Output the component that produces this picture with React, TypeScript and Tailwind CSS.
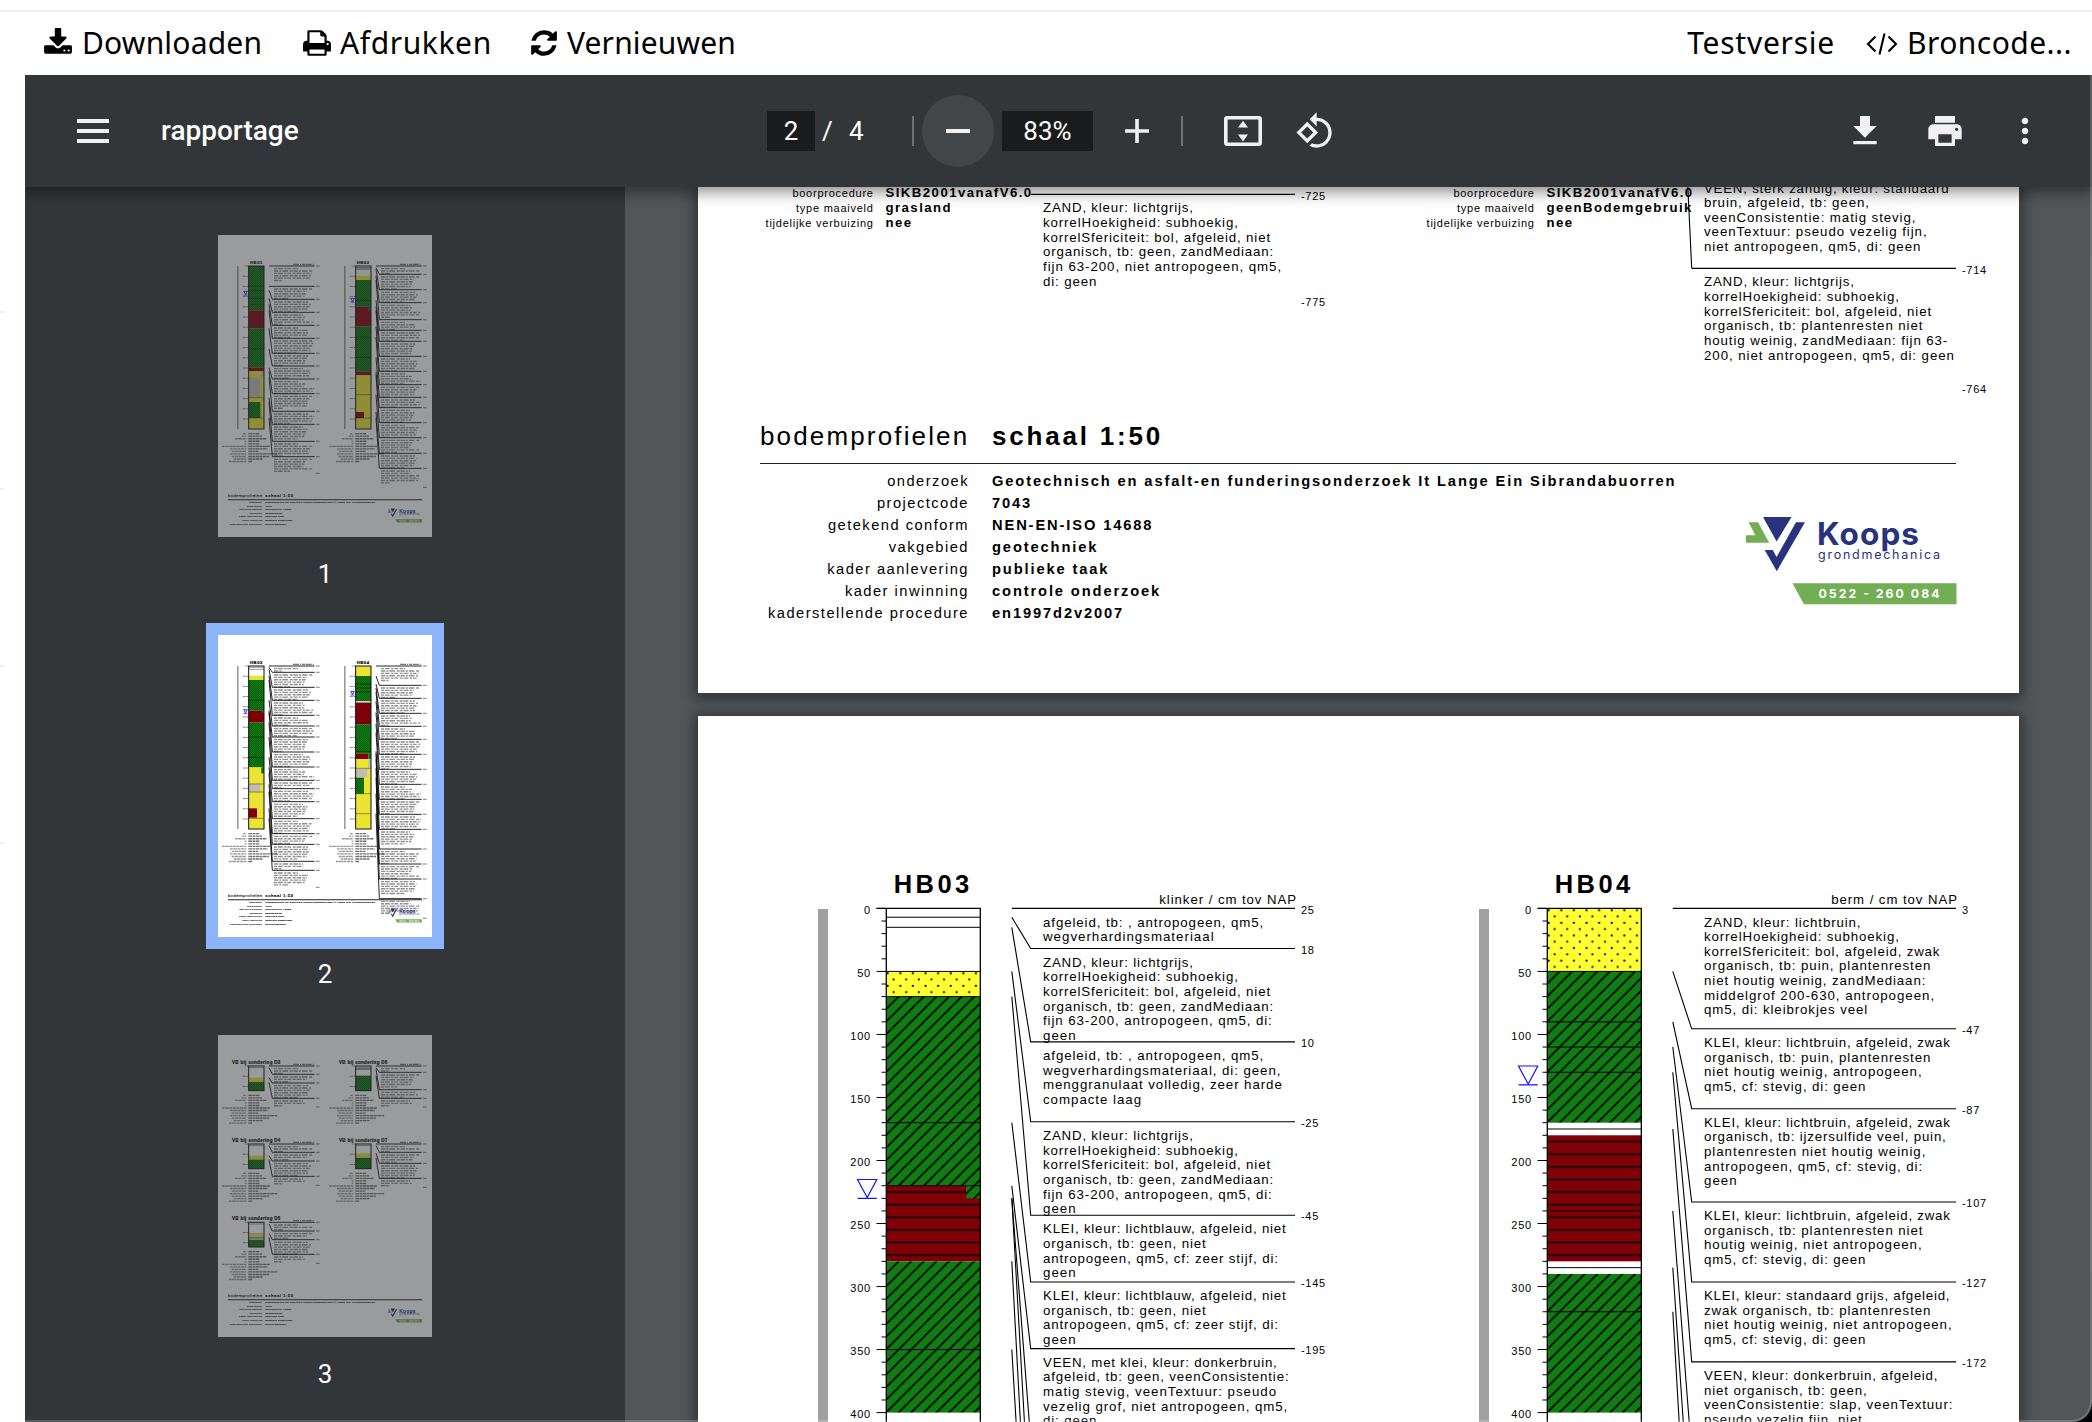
import React from "react";

const ARIAL = '"Liberation Sans", Arial, sans-serif';

const GREEN = "#0f7d12";
const RED = "#800008";
const YELLOW = "#ffff33";

/* ---------- header icons ---------- */

function HeaderIcon({ d, className }: { d: string; className: string }) {
  return (
    <svg viewBox="0 0 1792 1792" className={"block h-[30px] w-[30px] shrink-0 " + className}>
      <path d={d} fill="#000" />
    </svg>
  );
}

const DOWNLOAD =
  "M1344 1344q0-26-19-45t-45-19-45 19-19 45 19 45 45 19 45-19 19-45zm256 0q0-26-19-45t-45-19-45 19-19 45 19 45 45 19 45-19 19-45zm128-224v320q0 40-28 68t-68 28h-1472q-40 0-68-28t-28-68v-320q0-40 28-68t68-28h465l135 136q58 56 136 56t136-56l136-136h464q40 0 68 28t28 68zm-325-569q17 41-14 70l-448 448q-18 19-45 19t-45-19l-448-448q-31-29-14-70 17-39 59-39h256v-448q0-26 19-45t45-19h256q26 0 45 19t19 45v448h256q42 0 59 39z";
const PRINT =
  "M448 1536h896v-256h-896v256zm0-640h896v-384h-160q-40 0-68-28t-28-68v-160h-640v640zm1152 64q0-26-19-45t-45-19-45 19-19 45 19 45 45 19 45-19 19-45zm128 0v416q0 13-9.500 22.500t-22.500 9.500h-224v160q0 40-28 68t-68 28h-960q-40 0-68-28t-28-68v-160h-224q-13 0-22.500-9.500t-9.500-22.500v-416q0-79 56.500-135.500t135.500-56.500h64v-544q0-40 28-68t68-28h672q40 0 88 20t76 48l152 152q28 28 48 76t20 88v256h64q79 0 135.500 56.500t56.500 135.500z";
const REFRESH =
  "M1639 1056q0 5-1 7-64 268-268 434.500t-478 166.500q-146 0-282.500-55t-243.500-157l-129 129q-19 19-45 19t-45-19-19-45v-448q0-26 19-45t45-19h448q26 0 45 19t19 45-19 45l-137 137q71 66 161 102t187 36q134 0 250-65t186-179q11-17 53-117 8-23 30-23h192q13 0 22.500 9.500t9.500 22.500zm25-800v448q0 26-19 45t-45 19h-448q-26 0-45-19t-19-45 19-45l138-138q-148-137-349-137-134 0-250 65t-186 179q-11 17-53 117-8 23-30 23h-199q-13 0-22.500-9.500t-9.500-22.500v-7q65-268 270-434.500t480-166.500q146 0 284 55.500t245 156.500l130-129q19-19 45-19t45 19 19 45z";

function Header() {
  return (
    <header className="h-[75px] w-full bg-white">
      <div className="h-2.5" />
      <div className="h-0.5 bg-[#f0f0f0]" />
      <div
        className="flex h-[62px] items-start pl-[43px] pt-[16px] text-[30px] leading-[30px] text-black"
        style={{ fontFamily: '"Noto Sans", sans-serif' }}
      >
        <div className="flex w-[259px]">
          <HeaderIcon d={DOWNLOAD} className="mr-[9px]" />
          <span className="tracking-[0.2px]">Downloaden</span>
        </div>
        <div className="flex w-[227px]">
          <HeaderIcon d={PRINT} className="mr-2" />
          <span className="tracking-[0.6px]">Afdrukken</span>
        </div>
        <div className="flex">
          <HeaderIcon d={REFRESH} className="mr-2" />
          <span className="tracking-[0.15px]">Vernieuwen</span>
        </div>
        <div className="ml-auto flex pr-[20px]">
          <span className="tracking-[0.75px]">Testversie</span>
          <svg viewBox="0 0 32 24" className="ml-[31px] mr-[9px] mt-[4px] h-[24px] w-[32px]" fill="none" stroke="#000" strokeWidth="2.1">
            <path d="M9.500 4.500 L2 12 L9.500 19.500 M22.500 4.500 L30 12 L22.500 19.500 M18.500 1.500 L13.500 22.500" />
          </svg>
          <span className="tracking-[0.45px]">Broncode...</span>
        </div>
      </div>
    </header>
  );
}

/* ---------- viewer toolbar ---------- */

function ToolIcon({ d }: { d: string }) {
  return (
    <svg viewBox="0 0 24 24" className="block h-10 w-10 shrink-0 fill-[#f1f1f1]">
      <path d={d} />
    </svg>
  );
}

function Toolbar() {
  return (
    <div
      className="relative z-10 flex h-[112px] w-full shrink-0 items-center bg-[#323639] text-white shadow-[0_2px_14px_3px_rgba(0,0,0,0.45)]"
      style={{ fontFamily: "Roboto, sans-serif" }}
    >
      <div className="ml-[52px] flex w-[32px] flex-col gap-[6px]">
        <div className="h-1 bg-[#f1f1f1]" />
        <div className="h-1 bg-[#f1f1f1]" />
        <div className="h-1 bg-[#f1f1f1]" />
      </div>
      <div className="ml-[52px] w-[606px] text-[28px] font-medium leading-[40px]">rapportage</div>
      <div className="flex h-10 w-12 items-center justify-center bg-[#191b1c] text-[26px]">2</div>
      <div className="ml-[7px] w-[27px] text-[26px]">/</div>
      <div className="w-[63px] text-[26px]">4</div>
      <div className="h-[30px] w-0.5 bg-[#6f7274]" />
      <div className="ml-[8px] flex h-[72px] w-[72px] items-center justify-center rounded-full bg-[#424649]">
        <div className="h-[4px] w-6 bg-[#f1f1f1]" />
      </div>
      <div className="ml-[8px] flex h-10 w-[91px] items-center justify-center bg-[#191b1c] text-[26px]">83%</div>
      <svg viewBox="0 0 24 24" className="ml-[32px] block h-6 w-6 fill-[#f1f1f1]">
        <path d="M10.200 0h3.600v10.200H24v3.600H13.800V24h-3.600V13.800H0v-3.600h10.200z" />
      </svg>
      <div className="ml-[32px] h-[30px] w-0.5 bg-[#6f7274]" />
      <svg viewBox="0 0 38 30" className="ml-[41px] block h-[30px] w-[38px]">
        <rect x="1.800" y="1.800" width="34.400" height="26.400" rx="1.500" fill="none" stroke="#f1f1f1" strokeWidth="3.600" />
        <path d="M19 4.700L24 11.400H14zM19 25.600L24 18.400H14z" fill="#f1f1f1" />
      </svg>
      <div className="ml-[33px]">
        <ToolIcon d="M7.340 6.410L.86 12.900l6.490 6.480 6.490-6.480-6.500-6.490zM3.690 12.900l3.660-3.660L11 12.900l-3.660 3.660-3.650-3.660zm15.670-6.260C17.610 4.880 15.300 4 13 4V.76L8.760 5 13 9.240V6c1.790 0 3.580.68 4.950 2.050 2.730 2.730 2.730 7.170 0 9.900C16.580 19.320 14.790 20 13 20c-.97 0-1.940-.21-2.840-.61l-1.490 1.490C10.020 21.620 11.510 22 13 22c2.300 0 4.610-.88 6.360-2.640 3.520-3.510 3.520-9.210 0-12.720z" />
      </div>
      <div className="ml-auto mr-[47px] flex gap-10">
        <ToolIcon d="M19 9h-4V3H9v6H5l7 7 7-7zM5 18v2h14v-2H5z" />
        <ToolIcon d="M19 8H5c-1.660 0-3 1.340-3 3v6h4v4h12v-4h4v-6c0-1.660-1.340-3-3-3zm-3 11H8v-5h8v5zm3-7c-.55 0-1-.45-1-1s.45-1 1-1 1 .45 1 1-.45 1-1 1zm-1-9H6v4h12V3z" />
        <ToolIcon d="M12 8c1.100 0 2-.9 2-2s-.9-2-2-2-2 .9-2 2 .9 2 2 2zm0 2c-1.100 0-2 .9-2 2s.9 2 2 2 2-.9 2-2-.9-2-2-2zm0 6c-1.100 0-2 .9-2 2s.9 2 2 2 2-.9 2-2-.9-2-2-2z" />
      </div>
    </div>
  );
}

/* ---------- logo ---------- */

function LogoShapes() {
  return (
    <g>
      <path d="M1763 517H1791.500L1776.600 541.500Z" fill="#28327d" />
      <path d="M1764.700 550H1772.800L1776.600 557L1796 522.300H1805L1776.800 571.200Z" fill="#28327d" />
      <path d="M1748.600 522.300H1758L1769.200 542.800H1746V535.300H1755.300Z" fill="#73ad54" />
      <path d="M1792.500 583.300H1956.500V604.200H1804Z" fill="#73ad54" />
      <text x="1817" y="545.300" fontFamily="Inter, sans-serif" fontWeight="700" fontSize="31.500" fill="#28327d" textLength="102">Koops</text>
      <text x="1818" y="559.300" fontFamily="Inter, sans-serif" fontSize="12.500" fill="#28327d" textLength="122">grondmechanica</text>
      <text x="1818.500" y="598.300" fontFamily="Inter, sans-serif" fontWeight="700" fontSize="12.300" fill="#fff" textLength="121">0522 - 260 084</text>
    </g>
  );
}

/* ---------- bore profile ---------- */

const PX_PER_CM = 1.2605;
const TOP = 908.4;
const depthY = (cm: number) => TOP + cm * PX_PER_CM;

type Fill = "sand" | "clay" | "peat" | "none";
interface Layer { from: number; to: number; fill: Fill; left?: number; right?: number }
interface Entry { depth?: string; y: number; start?: number; lines: string[] }
interface Profile {
  id: string;
  name: string;
  surface: string;
  water: number;
  layers: Layer[];
  rules: number[];
  entries: Entry[];
}

const HB03: Profile = {
  id: "a",
  name: "HB03",
  surface: "klinker / cm tov NAP",
  water: 1179.5,
  layers: [
    { from: 0, to: 50, fill: "none" },
    { from: 50, to: 70, fill: "sand" },
    { from: 70, to: 220, fill: "clay" },
    { from: 220, to: 280, fill: "peat" },
    { from: 220, to: 230, fill: "clay", left: 966 },
    { from: 280, to: 400, fill: "clay" },
  ],
  rules: [7, 15, 50, 70, 170, 220, 350],
  entries: [
    { depth: "25", y: 908.4, start: 0, lines: ["afgeleid, tb: , antropogeen, qm5,", "wegverhardingsmateriaal"] },
    { depth: "18", y: 948.5, start: 7, lines: ["ZAND, kleur: lichtgrijs,", "korrelHoekigheid: subhoekig,", "korrelSfericiteit: bol, afgeleid, niet", "organisch, tb: geen, zandMediaan:", "fijn 63-200, antropogeen, qm5, di:", "geen"] },
    { depth: "10", y: 1041.9, start: 15, lines: ["afgeleid, tb: , antropogeen, qm5,", "wegverhardingsmateriaal, di: geen,", "menggranulaat volledig, zeer harde", "compacte laag"] },
    { depth: "-25", y: 1121.8, start: 50, lines: ["ZAND, kleur: lichtgrijs,", "korrelHoekigheid: subhoekig,", "korrelSfericiteit: bol, afgeleid, niet", "organisch, tb: geen, zandMediaan:", "fijn 63-200, antropogeen, qm5, di:", "geen"] },
    { depth: "-45", y: 1215.2, start: 70, lines: ["KLEI, kleur: lichtblauw, afgeleid, niet", "organisch, tb: geen, niet", "antropogeen, qm5, cf: zeer stijf, di:", "geen"] },
    { depth: "-145", y: 1282, start: 170, lines: ["KLEI, kleur: lichtblauw, afgeleid, niet", "organisch, tb: geen, niet", "antropogeen, qm5, cf: zeer stijf, di:", "geen"] },
    { depth: "-195", y: 1348.6, start: 220, lines: ["VEEN, met klei, kleur: donkerbruin,", "afgeleid, tb: geen, veenConsistentie:", "matig stevig, veenTextuur: pseudo", "vezelig grof, niet antropogeen, qm5,", "di: geen"] },
    { y: 1440, start: 230, lines: [] },
    { y: 1533, start: 230, lines: [] },
    { y: 1614, start: 280, lines: [] },
    { y: 1668, start: 350, lines: [] },
  ],
};

const HB04: Profile = {
  id: "b",
  name: "HB04",
  surface: "berm / cm tov NAP",
  water: 1066,
  layers: [
    { from: 0, to: 50, fill: "sand" },
    { from: 50, to: 170, fill: "clay" },
    { from: 180, to: 280, fill: "peat" },
    { from: 290, to: 400, fill: "clay" },
  ],
  rules: [50, 90, 110, 130, 175, 240, 285, 320],
  entries: [
    { depth: "3", y: 908.4, start: 0, lines: ["ZAND, kleur: lichtbruin,", "korrelHoekigheid: subhoekig,", "korrelSfericiteit: bol, afgeleid, zwak", "organisch, tb: puin, plantenresten", "niet houtig weinig, zandMediaan:", "middelgrof 200-630, antropogeen,", "qm5, di: kleibrokjes veel"] },
    { depth: "-47", y: 1028.8, start: 50, lines: ["KLEI, kleur: lichtbruin, afgeleid, zwak", "organisch, tb: puin, plantenresten", "niet houtig weinig, antropogeen,", "qm5, cf: stevig, di: geen"] },
    { depth: "-87", y: 1108.7, start: 90, lines: ["KLEI, kleur: lichtbruin, afgeleid, zwak", "organisch, tb: ijzersulfide veel, puin,", "plantenresten niet houtig weinig,", "antropogeen, qm5, cf: stevig, di:", "geen"] },
    { depth: "-107", y: 1202, start: 110, lines: ["KLEI, kleur: lichtbruin, afgeleid, zwak", "organisch, tb: plantenresten niet", "houtig weinig, niet antropogeen,", "qm5, cf: stevig, di: geen"] },
    { depth: "-127", y: 1282, start: 130, lines: ["KLEI, kleur: standaard grijs, afgeleid,", "zwak organisch, tb: plantenresten", "niet houtig weinig, niet antropogeen,", "qm5, cf: stevig, di: geen"] },
    { depth: "-172", y: 1361.9, start: 175, lines: ["VEEN, kleur: donkerbruin, afgeleid,", "niet organisch, tb: geen,", "veenConsistentie: slap, veenTextuur:", "pseudo vezelig fijn, niet"] },
    { y: 1454, start: 240, lines: [] },
    { y: 1546, start: 285, lines: [] },
    { y: 1639, start: 320, lines: [] },
  ],
};

/* Printed width of each description line, in page pixels. */
const LINE_WIDTH: Record<string, number> = {
  "afgeleid, tb: , antropogeen, qm5,": 219.6,
  "wegverhardingsmateriaal": 170,
  "ZAND, kleur: lichtgrijs,": 149.3,
  "korrelHoekigheid: subhoekig,": 194.3,
  "korrelSfericiteit: bol, afgeleid, niet": 226.5,
  "organisch, tb: geen, zandMediaan:": 229.6,
  "fijn 63-200, antropogeen, qm5, di:": 228.2,
  "geen": 32.1,
  "wegverhardingsmateriaal, di: geen,": 236.8,
  "menggranulaat volledig, zeer harde": 238.2,
  "compacte laag": 97.5,
  "KLEI, kleur: lichtblauw, afgeleid, niet": 242.1,
  "organisch, tb: geen, niet": 162.1,
  "antropogeen, qm5, cf: zeer stijf, di:": 234.3,
  "VEEN, met klei, kleur: donkerbruin,": 233.2,
  "afgeleid, tb: geen, veenConsistentie:": 245,
  "matig stevig, veenTextuur: pseudo": 232.5,
  "vezelig grof, niet antropogeen, qm5,": 243.6,
  "di: geen": 52.9,
  "ZAND, kleur: lichtbruin,": 155.9,
  "korrelSfericiteit: bol, afgeleid, zwak": 234.9,
  "organisch, tb: puin, plantenresten": 225.8,
  "niet houtig weinig, zandMediaan:": 220.8,
  "middelgrof 200-630, antropogeen,": 229.5,
  "qm5, di: kleibrokjes veel": 162.6,
  "KLEI, kleur: lichtbruin, afgeleid, zwak": 245.3,
  "niet houtig weinig, antropogeen,": 217,
  "qm5, cf: stevig, di: geen": 160.9,
  "organisch, tb: ijzersulfide veel, puin,": 241.2,
  "plantenresten niet houtig weinig,": 220.8,
  "antropogeen, qm5, cf: stevig, di:": 217.5,
  "organisch, tb: plantenresten niet": 217.9,
  "houtig weinig, niet antropogeen,": 217,
  "KLEI, kleur: standaard grijs, afgeleid,": 244.9,
  "zwak organisch, tb: plantenresten": 225.8,
  "niet houtig weinig, niet antropogeen,": 247,
  "VEEN, kleur: donkerbruin, afgeleid,": 232.8,
  "niet organisch, tb: geen,": 162.2,
  "veenConsistentie: slap, veenTextuur:": 247.8,
  "pseudo vezelig fijn, niet": 157.2,
  "fijn 63-200, niet antropogeen, qm5,": 237.5,
  "VEEN, sterk zandig, kleur: standaard": 244,
  "bruin, afgeleid, tb: geen,": 164.3,
  "veenConsistentie: matig stevig,": 210.9,
  "veenTextuur: pseudo vezelig fijn,": 222,
  "niet antropogeen, qm5, di: geen": 215.8,
  "houtig weinig, zandMediaan: fijn 63-": 242.7,
  "200, niet antropogeen, qm5, di: geen": 249.4,
};

function Description({ y, lines }: { y: number; lines: string[] }) {
  return (
    <g fontSize="13.3">
      {lines.map((line, i) => (
        <text key={i} x="1043" y={y + 18.1 + i * 14.66} textLength={LINE_WIDTH[line] + 0.6}>{line}</text>
      ))}
    </g>
  );
}

function BoreProfile({ profile }: { profile: Profile }) {
  const { id } = profile;
  const fillOf: Record<Fill, string> = {
    sand: `url(#sand-${id})`,
    clay: `url(#clay-${id})`,
    peat: `url(#peat-${id})`,
    none: "#fff",
  };
  const ticks = Array.from({ length: 41 }, (_, i) => i * 10);
  return (
    <svg viewBox="698 716 661 706" className="block h-[706px] w-[661px] shrink-0" fontFamily={ARIAL} fill="#000">
      <defs>
        <pattern id={`sand-${id}`} patternUnits="userSpaceOnUse" x="886" y="908.4" width="12.605" height="12.605">
          <rect width="12.605" height="12.605" fill={YELLOW} />
          <circle cx="1.700" cy="1.900" r="1.100" />
          <circle cx="7.600" cy="8.100" r="1.100" />
        </pattern>
        <pattern id={`clay-${id}`} patternUnits="userSpaceOnUse" x="886" y="908.4" width="12.605" height="12.605">
          <rect width="12.605" height="12.605" fill={GREEN} />
          <path d="M-2 14.605L14.605 -2M-2 2L2 -2M10.605 14.605L14.605 10.605" stroke="#000" strokeWidth="1.600" />
        </pattern>
        <pattern id={`peat-${id}`} patternUnits="userSpaceOnUse" x="886" y="908.4" width="12.605" height="12.605">
          <rect width="12.605" height="12.605" fill={RED} />
          <rect y="5.600" width="12.605" height="1.500" />
        </pattern>
      </defs>

      <text x="893.800" y="892.500" fontSize="25.500" fontWeight="700" letterSpacing="3.400">{profile.name}</text>
      <rect x="818" y="909" width="10" height="520" fill="#a0a0a0" />

      {profile.layers.map((l, i) => (
        <rect key={i} x={l.left ?? 886.5} y={depthY(l.from)} width={(l.right ?? 980.2) - (l.left ?? 886.5)} height={(l.to - l.from) * PX_PER_CM} fill={fillOf[l.fill]} />
      ))}
      {profile.rules.map((cm) => (
        <line key={cm} x1="886" x2="980.5" y1={depthY(cm)} y2={depthY(cm)} stroke="#000" strokeWidth="1" />
      ))}
      <path d="M876.500 908.400H980.500M886.300 908V1430M980.300 908V1430" stroke="#000" strokeWidth="1.300" fill="none" />
      {ticks.map((cm) => (
        <line key={cm} x1={cm % 50 === 0 ? 876.5 : 881.5} x2="886" y1={depthY(cm)} y2={depthY(cm)} stroke="#000" strokeWidth="1" />
      ))}
      {ticks.filter((cm) => cm % 50 === 0).map((cm) => (
        <text key={cm} x="871" y={depthY(cm) + 5.2} fontSize="11" letterSpacing="0.8" textAnchor="end">{cm}</text>
      ))}

      <path
        d={`M857.500 ${profile.water}H876.800L867.200 ${profile.water + 18}ZM857.500 ${profile.water + 18.800}H876.800`}
        fill="none"
        stroke="#1414ff"
        strokeWidth="1.200"
      />

      <text x="1297" y="904" fontSize="13.200" letterSpacing="0.95" textAnchor="end">{profile.surface}</text>
      {profile.entries.map((e, i) => (
        <g key={i}>
          <path d={`M1011.800 ${depthY(e.start ?? 0)}L1030.700 ${e.y}H1295`} fill="none" stroke="#000" strokeWidth="1.100" />
          {e.depth && <text x="1301" y={e.y + 5.2} fontSize="11" letterSpacing="0.7">{e.depth}</text>}
          <Description y={e.y} lines={e.lines} />
        </g>
      ))}
    </svg>
  );
}

/* ---------- bottom part of the preceding page ---------- */

interface Tail { meta: [string, string][]; above?: string[]; y: number; depth: string; lines: string[]; endY: number; end: string }

function ProfileTail({ tail }: { tail: Tail }) {
  return (
    <svg viewBox="698 187 661 225" className="block h-[225px] w-[661px] shrink-0" fontFamily={ARIAL} fill="#000">
      {tail.meta.map(([label, value], i) => (
        <g key={label}>
          <text x="873.700" y={196.800 + i * 15.200} fontSize="11" letterSpacing="0.75" textAnchor="end">{label}</text>
          <text x="885.500" y={196.800 + i * 15.200} fontSize="13.200" fontWeight="700" letterSpacing="1.450">{value}</text>
        </g>
      ))}
      {tail.above && (
        <>
          <Description y={174.400} lines={tail.above} />
          <path d="M1026.500 180L1030.700 268.300" stroke="#000" strokeWidth="1.100" />
        </>
      )}
      <path d={`M1030.700 ${tail.y}H1295`} stroke="#000" strokeWidth="1.200" />
      <text x="1301" y={tail.y + 5.400} fontSize="11" letterSpacing="0.7">{tail.depth}</text>
      <Description y={tail.y} lines={tail.lines} />
      <text x="1301" y={tail.endY} fontSize="11" letterSpacing="0.7">{tail.end}</text>
    </svg>
  );
}

const TAIL_LEFT: Tail = {
  meta: [["boorprocedure", "SIKB2001vanafV6.0"], ["type maaiveld", "grasland"], ["tijdelijke verbuizing", "nee"]],
  y: 194.3,
  depth: "-725",
  lines: ["ZAND, kleur: lichtgrijs,", "korrelHoekigheid: subhoekig,", "korrelSfericiteit: bol, afgeleid, niet", "organisch, tb: geen, zandMediaan:", "fijn 63-200, niet antropogeen, qm5,", "di: geen"],
  endY: 305.7,
  end: "-775",
};

const TAIL_RIGHT: Tail = {
  meta: [["boorprocedure", "SIKB2001vanafV6.0"], ["type maaiveld", "geenBodemgebruik"], ["tijdelijke verbuizing", "nee"]],
  above: ["VEEN, sterk zandig, kleur: standaard", "bruin, afgeleid, tb: geen,", "veenConsistentie: matig stevig,", "veenTextuur: pseudo vezelig fijn,", "niet antropogeen, qm5, di: geen"],
  y: 268.3,
  depth: "-714",
  lines: ["ZAND, kleur: lichtgrijs,", "korrelHoekigheid: subhoekig,", "korrelSfericiteit: bol, afgeleid, niet", "organisch, tb: plantenresten niet", "houtig weinig, zandMediaan: fijn 63-", "200, niet antropogeen, qm5, di: geen"],
  endY: 392.7,
  end: "-764",
};

const FOOTER_ROWS: [string, string][] = [
  ["onderzoek", "Geotechnisch en asfalt-en funderingsonderzoek It Lange Ein Sibrandabuorren"],
  ["projectcode", "7043"],
  ["getekend conform", "NEN-EN-ISO 14688"],
  ["vakgebied", "geotechniek"],
  ["kader aanlevering", "publieke taak"],
  ["kader inwinning", "controle onderzoek"],
  ["kaderstellende procedure", "en1997d2v2007"],
];

function PageFooter() {
  return (
    <div className="ml-[62px] mr-[63px] text-black" style={{ fontFamily: ARIAL }}>
      <div className="flex h-[51px] items-start text-[26px] leading-[48px]">
        <span className="w-[232px] shrink-0 tracking-[2.15px]">bodemprofielen</span>
        <span className="font-bold tracking-[2.8px]">schaal 1:50</span>
      </div>
      <div className="h-px bg-[#222]" />
      <div className="flex justify-between pt-[5.5px]">
        <div className="text-[14.7px] leading-[22px]">
          {FOOTER_ROWS.map(([label, value]) => (
            <div key={label} className="flex">
              <span className="w-[209px] shrink-0 text-right tracking-[1.47px]">{label}</span>
              <span className="ml-[23px] whitespace-nowrap font-bold tracking-[1.87px]">{value}</span>
            </div>
          ))}
        </div>
        <svg viewBox="1740 510 220 100" className="-mr-[4px] mt-[40px] h-[100px] w-[220px] shrink-0">
          <LogoShapes />
        </svg>
      </div>
    </div>
  );
}

/* ---------- thumbnails ---------- */

interface Seg { x?: number; w?: number; y: number; h: number; c: string }

const G = GREEN;
const R = RED;
const Y = "#ece432";
const S = "#bdbdbd";

const lineCount = (gap: number) => Math.min(6, Math.max(2, Math.floor((gap - 5) / 6.5)));

function ThumbText({ x, y, n, seed }: { x: number; y: number; n: number; seed: number }) {
  return (
    <g stroke="#222" strokeOpacity="0.5" strokeWidth="4.200">
      {Array.from({ length: n }, (_, i) => {
        const last = i === n - 1;
        const len = last ? 26 + ((seed * 7) % 3) * 22 : i === 0 ? 72 + ((seed * 11) % 4) * 15 : 88 + ((seed * 13 + i * 29) % 32);
        return (
          <line key={i} x1={x} x2={x + len} y1={y + 8 + i * 7.12} y2={y + 8 + i * 7.12} strokeDasharray={(i + seed) % 2 ? "13 3 6 3 17 5 9 2.500" : "9 2.500 15 4 7 2.500 11 5"} />
        );
      })}
    </g>
  );
}

function ThumbProfile({ x, y, name, titleX, height, segs, rules, seps, starts, end, water }: {
  x: number; y: number; name: string; titleX: number; height: number; segs: Seg[]; rules: number[]; seps: number[]; starts: number[]; end?: number; water?: number;
}) {
  const tickCount = Math.floor(height / 30.6) + 1;
  const long = height > 200;
  return (
    <g transform={`translate(${x} ${y})`} fontFamily={ARIAL}>
      <text x={titleX} y="-6" fontSize={long ? 12.5 : 13.5} fontWeight="700" stroke="#000" strokeWidth="0.500" textLength={long ? 37 : 145}>{name}</text>
      {long && <rect x="57.500" y="0" width="4" height={height} fill="#888" />}
      <rect x="92" y="0" width="46" height={height} fill="#fff" />
      {segs.map((s, i) => (
        <rect key={i} x={92 + (s.x ?? 0)} y={s.y} width={s.w ?? 46} height={s.h} fill={s.c} />
      ))}
      {segs.filter((s) => s.c === G).map((s, i) => (
        <rect key={i} x={92 + (s.x ?? 0)} y={s.y} width={s.w ?? 46} height={s.h} fill="url(#thumb-hatch)" />
      ))}
      {rules.map((r) => <line key={r} x1="92" x2="138" y1={r} y2={r} stroke="#000" strokeOpacity="0.65" strokeWidth="1.800" />)}
      <rect x="92" y="0" width="46" height={height} fill="none" stroke="#111" strokeWidth="3" />
      <path d={Array.from({ length: tickCount }, (_, i) => `M86 ${i * 30.6}H92`).join("")} stroke="#222" strokeWidth="2" />
      <path d={Array.from({ length: tickCount }, (_, i) => `M${i === 0 ? 80 : 74} ${i * 30.6}H84`).join("")} stroke="#444" strokeOpacity="0.6" strokeWidth="3" />
      <line x1="225" x2="290" y1="-5" y2="-5" stroke="#333" strokeOpacity="0.65" strokeWidth="4" strokeDasharray="18 3 3 3 9 2" />
      {seps.map((s, i) => (
        <g key={s}>
          <path d={`M153 ${starts[i]}L163 ${s}H290`} fill="none" stroke="#000" strokeOpacity="0.85" strokeWidth="3" />
          <line x1="294" x2="305" y1={s} y2={s} stroke="#444" strokeOpacity="0.6" strokeWidth="3.500" />
          <ThumbText x={168} y={s} seed={i} n={lineCount((seps[i + 1] ?? end ?? s + 48) - s)} />
        </g>
      ))}
      {end && <line x1="294" x2="305" y1={end} y2={end} stroke="#444" strokeOpacity="0.6" strokeWidth="3.500" />}
      {water && <path d={`M77 ${water}H88L83 ${water + 9}ZM77 ${water + 11}H88`} fill="none" stroke="#1414ff" strokeWidth="2.600" />}
      <g strokeOpacity="0.6" strokeWidth="4">
        {[[10, 34], [14, 41], [34, 54], [5, 34], [5, 34], [73, 66], [49, 58], [44, 30], [49, 88], [44, 62], [38, 44], [52, 13]].map(([a, b], i) => (
          <g key={i}>
            <line x1={85 - a} x2="85" y1={height + 14 + i * 7.6} y2={height + 14 + i * 7.6} stroke="#555" strokeDasharray="8 1.500 11 1.500" />
            <line x1="91" x2={91 + b} y1={height + 14 + i * 7.6} y2={height + 14 + i * 7.6} stroke="#111" strokeDasharray="11 1.500 8 1.500" />
          </g>
        ))}
      </g>
    </g>
  );
}

function ThumbPage({ children }: { children: React.ReactNode }) {
  return (
    <svg viewBox="0 0 642 906" className="block h-[302px] w-[214px] bg-white">
      <defs>
        <pattern id="thumb-hatch" patternUnits="userSpaceOnUse" width="6" height="6">
          <path d="M-1 7L7 -1" stroke="#003000" strokeOpacity="0.7" strokeWidth="1.600" />
        </pattern>
      </defs>
      {children}
      <g fontFamily={ARIAL} stroke="#000" strokeWidth="0.300">
        <text x="30" y="786" fontSize="12.500" textLength="102">bodemprofielen</text>
        <text x="142" y="786" fontSize="12.500" fontWeight="700" textLength="83">schaal 1:50</text>
        <rect x="30" y="792.500" width="582" height="3" fill="#444" />
        {FOOTER_ROWS.map(([label, value], i) => (
          <g key={label} fontSize="7.200">
            <text x="132" y={804.500 + i * 10.700} textAnchor="end" letterSpacing="0.650">{label}</text>
            <text x="142" y={804.500 + i * 10.700} fontWeight="700" letterSpacing="0.850">{value}</text>
          </g>
        ))}
      </g>
      <g transform="translate(-339.500 569.200) scale(0.486)">
        <LogoShapes />
      </g>
    </svg>
  );
}

function Thumb1() {
  return (
    <ThumbPage>
      <ThumbProfile
        x={0} y={93} name="HB01" titleX={96} height={489} water={76}
        segs={[{ y: 0, h: 133, c: G }, { y: 133, h: 54, c: R }, { y: 187, h: 118, c: G }, { y: 305, h: 11, c: R }, { y: 316, h: 172, c: Y }, { x: 38, w: 8, y: 318, h: 16, c: S }, { w: 35, y: 335, h: 59, c: S }, { x: 38, w: 8, y: 398, h: 8, c: S }, { w: 35, y: 408, h: 48, c: G }]}
        rules={[60, 73, 97, 115, 249, 395, 456]}
        seps={[0, 61, 100, 139, 178, 217, 262, 300, 339, 383, 436, 475, 526, 572]}
        starts={[0, 61, 73, 97, 115, 133, 187, 249, 305, 316, 335, 395, 408, 456]}
        end={622}
      />
      <ThumbProfile
        x={321} y={93} name="HB02" titleX={95} height={489} water={97}
        segs={[{ y: 4, h: 6, c: S }, { y: 10, h: 18, c: "#f3f3f3" }, { y: 29, h: 13, c: Y }, { y: 42, h: 80, c: G }, { y: 122, h: 60, c: R }, { x: 38, w: 8, y: 122, h: 11, c: G }, { y: 182, h: 135, c: G }, { y: 317, h: 11, c: R }, { y: 328, h: 160, c: Y }, { w: 25, y: 438, h: 18, c: R }]}
        rules={[5, 10, 103, 213, 274, 386, 456]}
        seps={[0, 25, 71, 110, 161, 193, 226, 271, 316, 356, 394, 425, 470, 515, 562, 607]}
        starts={[0, 5, 10, 29, 42, 103, 122, 133, 182, 213, 274, 317, 328, 386, 438, 456]}
        end={664}
      />
    </ThumbPage>
  );
}

function Thumb2() {
  return (
    <ThumbPage>
      <ThumbProfile
        x={0} y={93} name="HB03" titleX={96} height={489} water={131}
        segs={[{ y: 29, h: 13, c: Y }, { y: 42, h: 92, c: G }, { y: 134, h: 36, c: R }, { x: 38, w: 8, y: 134, h: 6, c: G }, { y: 170, h: 134, c: G }, { y: 304, h: 184, c: Y }, { x: 38, w: 8, y: 304, h: 18, c: G }, { w: 35, y: 355, h: 22, c: S }, { w: 25, y: 427, h: 28, c: R }]}
        rules={[4, 10, 103, 213, 274, 354, 378, 457]}
        seps={[0, 19, 64, 103, 148, 180, 213, 258, 303, 343, 368, 407, 458, 503, 535, 586, 613]}
        starts={[0, 4, 10, 29, 42, 103, 134, 140, 170, 213, 274, 304, 322, 355, 377, 427, 457]}
        end={664}
      />
      <ThumbProfile
        x={321} y={93} name="HB04" titleX={95} height={489} water={76}
        segs={[{ y: 0, h: 30, c: Y }, { y: 30, h: 75, c: G }, { y: 106, h: 4, c: S }, { y: 110, h: 64, c: R }, { y: 175, h: 88, c: G }, { w: 38, y: 263, h: 16, c: R }, { x: 38, w: 8, y: 263, h: 16, c: G }, { y: 279, h: 209, c: Y }, { x: 38, w: 8, y: 282, h: 25, c: S }, { w: 35, y: 309, h: 24, c: S }, { w: 25, y: 335, h: 48, c: G }]}
        rules={[54, 66, 78, 174, 256, 307, 383, 443]}
        seps={[0, 58, 97, 142, 181, 220, 265, 310, 355, 400, 445, 490, 549, 594, 639, 698]}
        starts={[0, 30, 54, 66, 78, 106, 140, 174, 200, 256, 263, 279, 307, 335, 383, 443]}
        end={757}
      />
    </ThumbPage>
  );
}

function Thumb3() {
  return (
    <ThumbPage>
      <ThumbProfile x={0} y={93} name="VB bij sondering D3" titleX={42} height={74} segs={[{ y: 35, h: 14, c: Y }, { y: 49, h: 25, c: G }]} rules={[5, 49]} seps={[0, 25, 51, 97]} starts={[0, 5, 35, 49]} end={123} />
      <ThumbProfile x={321} y={93} name="VB bij sondering D6" titleX={42} height={74} segs={[{ y: 4, h: 6, c: "#999" }, { y: 29, h: 45, c: G }]} rules={[10]} seps={[0, 19, 71, 97]} starts={[0, 5, 10, 29]} end={123} />
      <ThumbProfile x={0} y={327} name="VB bij sondering D4" titleX={42} height={74} segs={[{ y: 35, h: 12, c: Y }, { y: 47, h: 27, c: G }]} rules={[5]} seps={[0, 25, 51, 97]} starts={[0, 5, 35, 47]} end={124} />
      <ThumbProfile x={321} y={327} name="VB bij sondering D7" titleX={42} height={74} segs={[{ y: 28, h: 12, c: Y }, { y: 42, h: 32, c: G }]} rules={[5, 42]} seps={[0, 25, 58, 103]} starts={[0, 5, 28, 42]} end={130} />
      <ThumbProfile x={0} y={562} name="VB bij sondering D5" titleX={42} height={74} segs={[{ y: 32, h: 4, c: S }, { y: 36, h: 10, c: Y }, { y: 46, h: 7, c: S }, { y: 53, h: 21, c: G }]} rules={[5, 46]} seps={[0, 26, 52, 96]} starts={[0, 5, 33, 46]} end={123} />
    </ThumbPage>
  );
}

function Sidebar() {
  const label = "text-center text-[26px] leading-[30px] text-white";
  return (
    <aside className="flex h-full w-[600px] shrink-0 flex-col items-center bg-[#323639] pt-[48px]" style={{ fontFamily: "Roboto, sans-serif" }}>
      <div className="bg-white opacity-50"><Thumb1 /></div>
      <div className={"mt-[22px] " + label}>1</div>
      <div className="mt-[34px] border-[12px] border-[#8cb4f8] bg-white"><Thumb2 /></div>
      <div className={"mt-[10px] " + label}>2</div>
      <div className="mt-[46px] bg-white opacity-50"><Thumb3 /></div>
      <div className={"mt-[22px] " + label}>3</div>
    </aside>
  );
}

export default function App() {
  return (
    <div className="flex h-[1422px] w-[2092px] flex-col overflow-hidden bg-white">
      <Header />
      <div className="flex min-h-0 flex-1">
        <div className="flex w-[25px] shrink-0 flex-col gap-[175px] pt-[236px]">
          <div className="h-0.5 w-1 bg-[#eeeeee]" />
          <div className="h-0.5 w-1 bg-[#eeeeee]" />
          <div className="h-0.5 w-1 bg-[#eeeeee]" />
          <div className="h-0.5 w-1 bg-[#eeeeee]" />
        </div>
        <div className="min-w-0 flex-1 bg-black">
          <div className="relative flex h-full w-full flex-col overflow-hidden rounded-br-[20px] bg-[#525659]">
            <Toolbar />
            <div className="flex min-h-0 flex-1">
              <Sidebar />
              <main className="flex min-w-0 flex-1 flex-col overflow-hidden pl-[73px]">
                <section className="flex h-[506px] w-[1321px] shrink-0 flex-col bg-white shadow-[0_2px_12px_4px_rgba(0,0,0,0.4)]">
                  <div className="flex">
                    <ProfileTail tail={TAIL_LEFT} />
                    <ProfileTail tail={TAIL_RIGHT} />
                  </div>
                  <PageFooter />
                </section>
                <section className="mt-[23px] flex h-[706px] w-[1321px] shrink-0 bg-white shadow-[0_2px_12px_4px_rgba(0,0,0,0.4)]">
                  <BoreProfile profile={HB03} />
                  <BoreProfile profile={HB04} />
                </section>
              </main>
            </div>
            <div className="pointer-events-none absolute inset-0 z-20 rounded-br-[20px] border-b-2 border-r-2 border-white/20" />
          </div>
        </div>
      </div>
    </div>
  );
}
